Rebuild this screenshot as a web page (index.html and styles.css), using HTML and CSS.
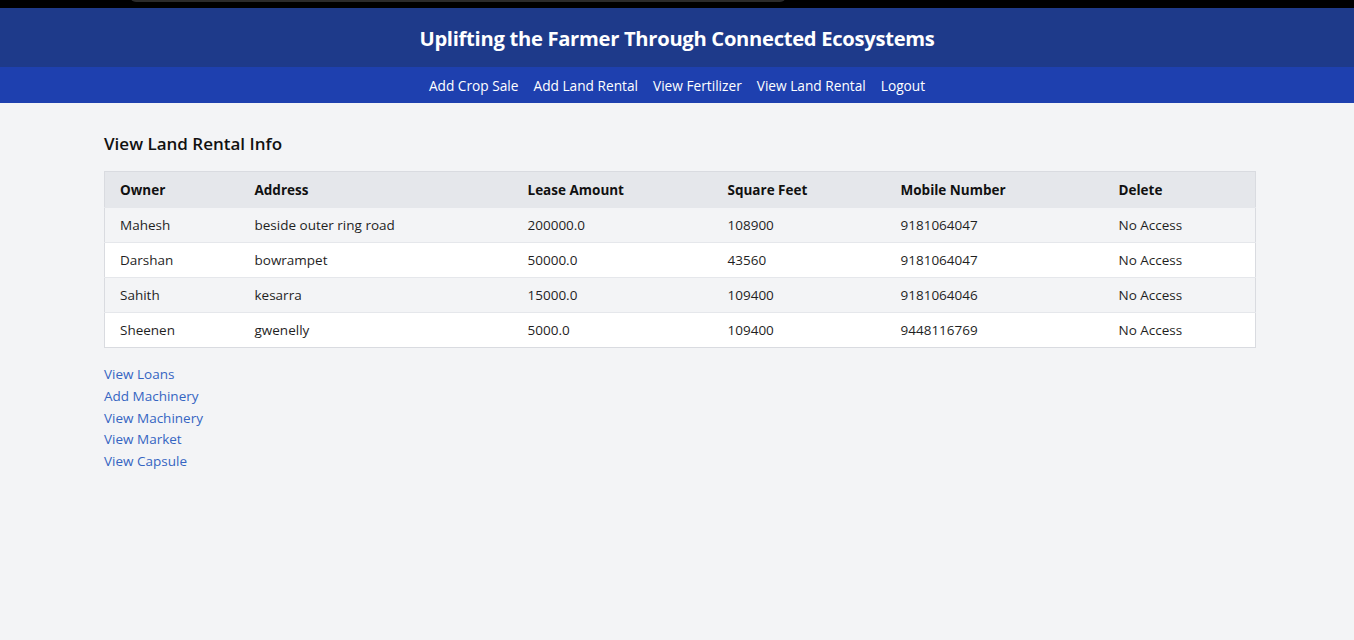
FILE: index.html
```html
<!DOCTYPE html>
<html lang="en">
<head>
<meta charset="utf-8">
<title>View Land Rental</title>
<link rel="stylesheet" href="styles.css">
</head>
<body>
<div class="topbar"><div class="tab"></div></div>
<header class="site-header">
  <h1 class="site-title">Uplifting the Farmer Through Connected Ecosystems</h1>
</header>
<nav class="site-nav">
  <a href="#">Add Crop Sale</a>
  <a href="#">Add Land Rental</a>
  <a href="#">View Fertilizer</a>
  <a href="#">View Land Rental</a>
  <a href="#">Logout</a>
</nav>
<main class="content">
  <h2 class="page-title">View Land Rental Info</h2>
  <table class="data-table">
    <colgroup>
      <col class="c1"><col class="c2"><col class="c3"><col class="c4"><col class="c5"><col class="c6">
    </colgroup>
    <thead>
      <tr><th>Owner</th><th>Address</th><th>Lease Amount</th><th>Square Feet</th><th>Mobile Number</th><th>Delete</th></tr>
    </thead>
    <tbody>
      <tr><td>Mahesh</td><td>beside outer ring road</td><td>200000.0</td><td>108900</td><td>9181064047</td><td>No Access</td></tr>
      <tr><td>Darshan</td><td>bowrampet</td><td>50000.0</td><td>43560</td><td>9181064047</td><td>No Access</td></tr>
      <tr><td>Sahith</td><td>kesarra</td><td>15000.0</td><td>109400</td><td>9181064046</td><td>No Access</td></tr>
      <tr><td>Sheenen</td><td>gwenelly</td><td>5000.0</td><td>109400</td><td>9448116769</td><td>No Access</td></tr>
    </tbody>
  </table>
  <div class="links">
    <a href="#">View Loans</a>
    <a href="#">Add Machinery</a>
    <a href="#">View Machinery</a>
    <a href="#">View Market</a>
    <a href="#">View Capsule</a>
  </div>
</main>
</body>
</html>
```
FILE: styles.css
```css
* { box-sizing: border-box; }
html, body { margin: 0; padding: 0; }
body {
  background: #f3f4f6;
  font-family: "Open Sans", "Noto Sans", sans-serif;
  color: #111827;
  min-height: 640px;
}
.topbar {
  height: 8px;
  background: #000;
  position: relative;
}
.tab {
  position: absolute;
  left: 130px;
  top: -6px;
  width: 656px;
  height: 8px;
  background: #2b2b2b;
  border-radius: 0 0 6px 6px;
}
.site-header {
  background: #1e3a8a;
  height: 59px;
  display: flex;
  align-items: center;
  justify-content: center;
}
.site-title {
  margin: 0;
  color: #fff;
  font-size: 20.2px;
  font-weight: 700;
  letter-spacing: -0.3px;
}
.site-nav {
  background: #1e40af;
  height: 36px;
  display: flex;
  align-items: center;
  justify-content: center;
  gap: 15px;
}
.site-nav a {
  color: #fff;
  text-decoration: none;
  font-size: 13.7px;
}
.content {
  padding: 29px 98px 0 104px;
}
.page-title {
  margin: 0 0 16px;
  font-size: 17px;
  font-weight: 600;
  color: #111;
}
.data-table {
  width: 100%;
  border-collapse: collapse;
  border: 1px solid #d9dbe0;
  font-size: 13.5px;
  table-layout: fixed;
}
.c1 { width: 135px; }
.c2 { width: 273px; }
.c3 { width: 200px; }
.c4 { width: 173px; }
.c5 { width: 218px; }
.c6 { width: auto; }
.data-table th {
  background: #e5e7eb;
  text-align: left;
  font-weight: 700;
  height: 36px;
  padding: 0 15px;
  color: #111;
}
.data-table td {
  height: 35px;
  padding: 0 15px;
  border-top: 1px solid #e5e7eb;
  color: #1f1f1f;
}
.data-table tbody tr:nth-child(odd) { background: #f3f4f6; }
.data-table tbody tr:nth-child(even) { background: #fff; }
.links {
  margin-top: 16px;
  display: flex;
  flex-direction: column;
  align-items: flex-start;
}
.links a {
  color: #3565c2;
  text-decoration: none;
  font-size: 13.5px;
  line-height: 21.8px;
}
```
